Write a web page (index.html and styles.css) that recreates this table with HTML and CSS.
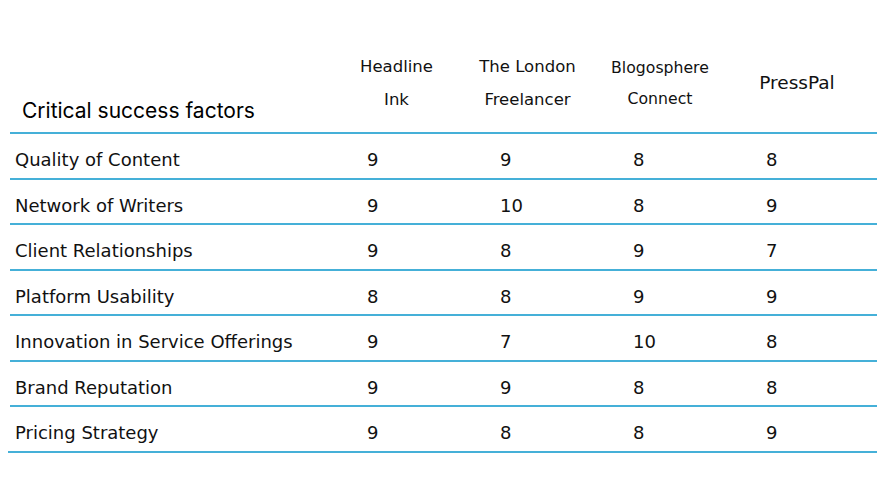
FILE: index.html
```html
<!DOCTYPE html>
<html>
<head>
<meta charset="utf-8">
<link rel="stylesheet" href="styles.css">
</head>
<body>
<div class="table">
  <div class="row head">
    <div class="cell title">Critical success factors</div>
    <div class="cell col-h">Headline<br>Ink</div>
    <div class="cell col-h shift2">The London<br>Freelancer</div>
    <div class="cell col-h small">Blogosphere<br>Connect</div>
    <div class="cell col-h single">PressPal</div>
    <div class="cell"></div>
  </div>
  <div class="row">
    <div class="cell name">Quality of Content</div>
    <div class="cell num">9</div><div class="cell num">9</div><div class="cell num">8</div><div class="cell num">8</div><div class="cell"></div>
  </div>
  <div class="row">
    <div class="cell name">Network of Writers</div>
    <div class="cell num">9</div><div class="cell num">10</div><div class="cell num">8</div><div class="cell num">9</div><div class="cell"></div>
  </div>
  <div class="row">
    <div class="cell name">Client Relationships</div>
    <div class="cell num">9</div><div class="cell num">8</div><div class="cell num">9</div><div class="cell num">7</div><div class="cell"></div>
  </div>
  <div class="row">
    <div class="cell name">Platform Usability</div>
    <div class="cell num">8</div><div class="cell num">8</div><div class="cell num">9</div><div class="cell num">9</div><div class="cell"></div>
  </div>
  <div class="row">
    <div class="cell name">Innovation in Service Offerings</div>
    <div class="cell num">9</div><div class="cell num">7</div><div class="cell num">10</div><div class="cell num">8</div><div class="cell"></div>
  </div>
  <div class="row">
    <div class="cell name">Brand Reputation</div>
    <div class="cell num">9</div><div class="cell num">9</div><div class="cell num">8</div><div class="cell num">8</div><div class="cell"></div>
  </div>
  <div class="row last">
    <div class="cell name">Pricing Strategy</div>
    <div class="cell num">9</div><div class="cell num">8</div><div class="cell num">8</div><div class="cell num">9</div><div class="cell"></div>
  </div>
</div>
</body>
</html>
```
FILE: styles.css
```css
html, body {
  margin: 0;
  padding: 0;
  background: #ffffff;
}
body {
  font-family: "DejaVu Sans", sans-serif;
  color: #111111;
}
.table {
  margin-left: 10px;
  width: 867px;
}
.row {
  display: grid;
  grid-template-columns: 320px 133px 133px 133px 133px 1fr;
  height: 43.57px;
  border-bottom: 2px solid #45b0d8;
}
.row.head {
  height: 132px;
}
.row.last {
  margin-left: -2px;
  width: 869px;
  grid-template-columns: 322px 133px 133px 133px 133px 1fr;
}
.cell {
  white-space: nowrap;
}
.name {
  font-size: 18px;
  line-height: 21px;
  padding: 15px 0 0 5px;
}
.row.last .name {
  padding-left: 7px;
}
.num {
  font-size: 18px;
  line-height: 21px;
  padding: 15px 0 0 37px;
}
.title {
  font-family: Inter, "DejaVu Sans", sans-serif;
  font-size: 21px;
  line-height: 26px;
  padding: 98px 0 0 12px;
  color: #000;
}
.col-h {
  text-align: center;
  font-size: 16.5px;
  line-height: 33px;
  padding-top: 50px;
}
.col-h.shift2 {
  padding-right: 4px;
}
.col-h.small {
  font-size: 15.7px;
  line-height: 31px;
  padding-top: 52px;
  padding-right: 5px;
}
.col-h.single {
  font-size: 18.5px;
  line-height: 22px;
  padding-top: 72px;
  padding-left: 3px;
}
```
